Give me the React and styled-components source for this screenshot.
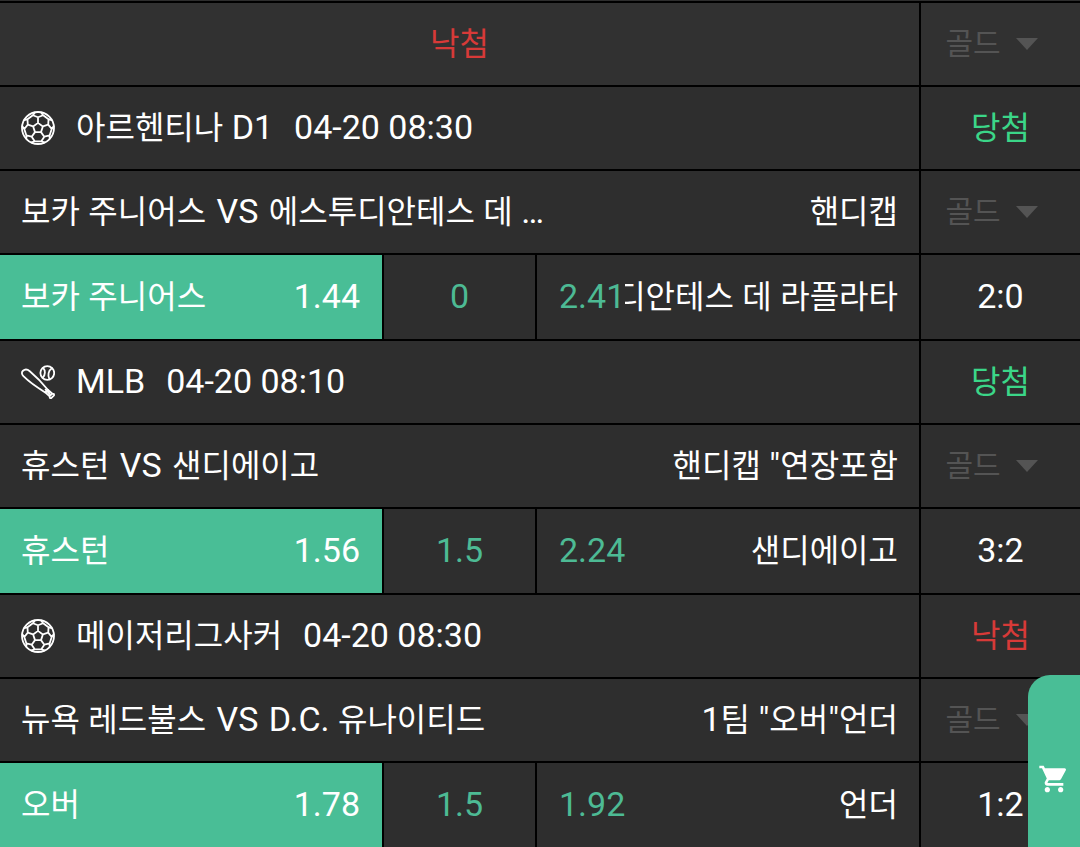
import styled, { createGlobalStyle } from "styled-components";
import { MdShoppingCart } from "react-icons/md";

const COLORS = {
    line: "#000000",
    cell: "#2e2e2e",
    head: "#313131",
    accent: "#49be96",
    odds: "#4dba94",
    win: "#3bd688",
    lose: "#d73a38",
    muted: "#545454",
    text: "#ffffff",
}

const RESULTS = {
    win: "당첨",
    lose: "낙첨",
}

const GAMES = [
    {
        id: 1, sport: "soccer", league: "아르헨티나 D1", date: "04-20 08:30", result: "win",
        teams: ["보카 주니어스", "에스투디안테스 데 …"], market: "핸디캡",
        home: "보카 주니어스", homeOdds: "1.44", line: "0", awayOdds: "2.41", away: "에스투디안테스 데 라플라타", score: "2:0",
    },
    {
        id: 2, sport: "baseball", league: "MLB", date: "04-20 08:10", result: "win",
        teams: ["휴스턴", "샌디에이고"], market: "핸디캡 \"연장포함",
        home: "휴스턴", homeOdds: "1.56", line: "1.5", awayOdds: "2.24", away: "샌디에이고", score: "3:2",
    },
    {
        id: 3, sport: "soccer", league: "메이저리그사커", date: "04-20 08:30", result: "lose",
        teams: ["뉴욕 레드불스", "D.C. 유나이티드"], market: "1팀 \"오버\"언더",
        home: "오버", homeOdds: "1.78", line: "1.5", awayOdds: "1.92", away: "언더", score: "1:2",
    },
]

// hangul is set a little smaller than latin letters and digits
function Label({ children }) {
    return children.split(/([가-힣]+)/).filter(Boolean).map((part, i) =>
        /[가-힣]/.test(part) ? <Hangul key={i}>{part}</Hangul> : part
    )
}

function polar(radius, angle) {
    const rad = (angle - 90) * Math.PI / 180
    return `${(17 + 16 * radius * Math.cos(rad)).toFixed(2)} ${(17 + 16 * radius * Math.sin(rad)).toFixed(2)}`
}

const BALL_PATH = [0, 72, 144, 216, 288].map((a) =>
    `M${polar(0.32, a)}L${polar(0.32, a + 72)}` +
    `M${polar(0.32, a)}L${polar(0.67, a)}` +
    `M${polar(0.98, a - 12)}L${polar(0.86, a - 22)}L${polar(0.67, a)}L${polar(0.86, a + 22)}L${polar(0.98, a + 12)}` +
    `M${polar(0.86, a + 22)}L${polar(0.86, a + 50)}`
).join("")

function SportIcon({ sport }) {
    if (sport === "soccer") {
        return (
            <IconSvg viewBox="0 0 34 34" aria-hidden="true">
                <circle cx="17" cy="17" r="16" />
                <path d={BALL_PATH} />
            </IconSvg>
        )
    }
    return (
        <IconSvg viewBox="0 0 34 34" aria-hidden="true">
            <circle cx="26.3" cy="8" r="6.9" />
            <path d="M22.2 2.8C24.6 5.4 24.4 9.8 21.8 12.6M30.9 3.2C27.4 5.4 26.4 10.4 28.4 14.2" />
            <path d="M24.2 27.4C17 23 8.6 17.4 2.4 11.2C.6 9.2 .4 7.2 2 5.8C3.8 4.2 6.6 4.4 8.8 6.2C15 11.4 21.4 18 26.8 24.8" />
            <path d="M24.2 27.4L26.8 24.8L31.4 28.6L33 29L33 30.4L30.2 33.2L29 33L28.4 31.2ZM24.6 24.6L28.6 28.8M28.4 31.2L31.4 28.6" />
        </IconSvg>
    )
}

function GoldSelect() {
    return (
        <SelectWrap>
            <Select disabled aria-label="포인트 종류" defaultValue="gold">
                <option value="gold">골드</option>
            </Select>
            <Arrow viewBox="0 0 22 12" aria-hidden="true"><path d="M0 0H22L11 12Z" /></Arrow>
        </SelectWrap>
    )
}

function Game({ game }) {
    return (
        <>
            <Row>
                <Cell>
                    <SportIcon sport={game.sport} />
                    <League><Label>{game.league}</Label></League>
                    <time>{game.date}</time>
                </Cell>
                <Side><Result $status={game.result}>{RESULTS[game.result]}</Result></Side>
            </Row>
            <Row>
                <Cell>
                    <Match>
                        <Label>{game.teams[0]}</Label> <Versus>VS</Versus> <Label>{game.teams[1]}</Label>
                    </Match>
                    <span><Label>{game.market}</Label></span>
                </Cell>
                <Side><GoldSelect /></Side>
            </Row>
            <Row $tall>
                <Odds>
                    <Pick type="button" aria-pressed="true" $active>
                        <Team><span><Label>{game.home}</Label></span></Team>
                        <span>{game.homeOdds}</span>
                    </Pick>
                    <Line>{game.line}</Line>
                    <Pick type="button" aria-pressed="false">
                        <Rate>{game.awayOdds}</Rate>
                        <Team $end><span><Label>{game.away}</Label></span></Team>
                    </Pick>
                </Odds>
                <Side><Score>{game.score}</Score></Side>
            </Row>
        </>
    )
}

export default function App() {
    return (
        <>
            <GlobalStyle />
            <List>
                <Edge />
                <Row>
                    <Cell $head><Result $status="lose">{RESULTS.lose}</Result></Cell>
                    <Side $head><GoldSelect /></Side>
                </Row>
                {GAMES.map((game) => <Game key={game.id} game={game} />)}
            </List>
            <CartTab type="button" aria-label="장바구니"><MdShoppingCart size={32} /></CartTab>
        </>
    )
}

const GlobalStyle = createGlobalStyle`
*{
    box-sizing:border-box;
}
body{
    margin:0;
    background:${COLORS.line};
    color:${COLORS.text};
    font-family:Roboto, "Noto Sans CJK KR", sans-serif;
    font-size:34px;
    line-height:40px;
}
button, select{
    font:inherit;
    color:inherit;
    border:none;
    margin:0;
}
`

const List = styled.main`
display:flex;
flex-direction:column;
gap:2px;
`

const Edge = styled.div`
height:1px;
background:${COLORS.cell};
`

const Row = styled.section`
display:grid;
grid-template-columns:minmax(0, 1fr) 159px;
gap:2px;
height:${props => props.$tall ? "84px" : "82px"};
white-space:nowrap;
`

const Cell = styled.div`
display:flex;
align-items:center;
justify-content:${props => props.$head ? "center" : "flex-start"};
padding:${props => props.$head ? "0 21px" : "0 21px 2px"};
background:${props => props.$head ? COLORS.head : COLORS.cell};
`

const Side = styled.div`
display:flex;
align-items:center;
justify-content:center;
background:${props => props.$head ? COLORS.head : COLORS.cell};
`

const Hangul = styled.span`
font-size:32px;
`

const Result = styled.strong`
font-size:32px;
font-weight:400;
color:${props => COLORS[props.$status]};
`

const Score = styled.span`
padding-bottom:2px;
`

const League = styled.span`
margin:0 21px;
`

const Match = styled.span`
flex:1;
min-width:0;
overflow:hidden;
text-overflow:ellipsis;
`

const Versus = styled.span`
margin:0 2px;
`

const Odds = styled.div`
display:grid;
grid-template-columns:minmax(0, 1fr) 151px minmax(0, 1fr);
gap:2px;
`

const Pick = styled.button`
display:flex;
align-items:center;
padding:${props => props.$active ? "0 22px 2px 21px" : "0 21px 2px 22px"};
background:${props => props.$active ? COLORS.accent : COLORS.cell};
cursor:pointer;
`

const Team = styled.span`
display:flex;
flex:1;
min-width:0;
overflow:hidden;
justify-content:${props => props.$end ? "flex-end" : "flex-start"};
`

const Rate = styled.span`
color:${COLORS.odds};
`

const Line = styled.div`
display:flex;
align-items:center;
justify-content:center;
padding-bottom:2px;
background:${COLORS.cell};
color:${COLORS.odds};
`

const SelectWrap = styled.div`
display:flex;
align-items:center;
gap:14px;
padding-right:18px;
color:${COLORS.muted};
`

const Select = styled.select`
appearance:none;
padding:0;
background:transparent;
font-size:30px;
line-height:40px;
opacity:1;
`

const Arrow = styled.svg`
width:22px;
height:12px;
fill:currentColor;
`

const IconSvg = styled.svg`
width:34px;
height:34px;
flex:none;
margin-top:2px;
fill:none;
stroke:${COLORS.text};
stroke-width:1.8;
stroke-linejoin:round;
stroke-linecap:round;
`

const CartTab = styled.button`
position:fixed;
right:0;
bottom:0;
display:flex;
justify-content:center;
align-items:flex-start;
width:52px;
height:172px;
padding:88px 0 0;
background:${COLORS.accent};
border-radius:22px 0 0 0;
cursor:pointer;
`
